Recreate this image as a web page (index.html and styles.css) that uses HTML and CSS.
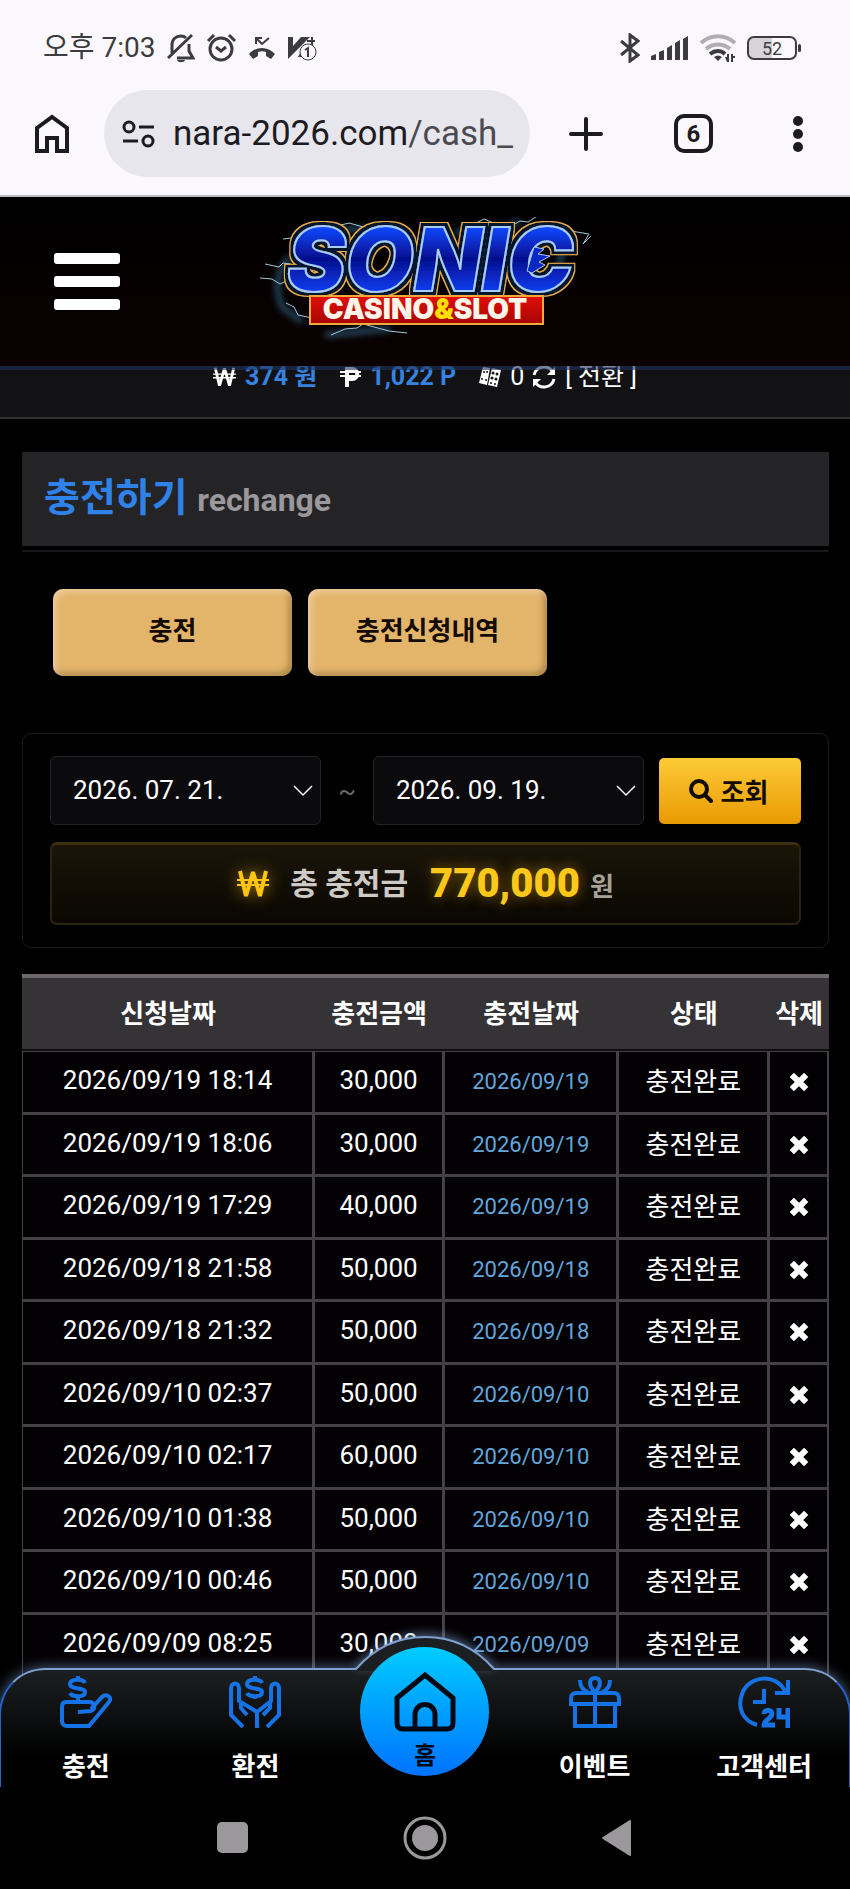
FILE: index.html
```html
<!DOCTYPE html>
<html lang="ko">
<head>
    <meta charset="UTF-8">
    <meta name="viewport" content="width=device-width, initial-scale=1.0">
    <title>충전하기</title>
    <link rel="stylesheet" href="styles.css">
</head>
<body>
    <svg class="sprite" aria-hidden="true">
        <symbol id="icon-x" viewBox="0 0 20 20">
            <path d="M4 4l12 12M16 4L4 16" stroke="#fff" stroke-width="5"/>
        </symbol>
        <symbol id="icon-won" viewBox="0 0 32 28">
            <path d="M3 1l6 25 7-24 7 24 6-25" fill="none" stroke="currentColor" stroke-width="4" stroke-linejoin="bevel"/>
            <path d="M0 10h32M0 15h32" stroke="currentColor" stroke-width="2"/>
        </symbol>
        <symbol id="icon-chevron" viewBox="0 0 20 12">
            <path d="M1 1l9 9 9-9" fill="none" stroke="#fff" stroke-width="1.5"/>
        </symbol>
    </svg>

    <div class="status-bar">
        <span class="clock">오후 7:03</span>
        <div class="status-left">
            <svg width="28" height="30" viewBox="0 0 28 30" fill="none" stroke="#3c3c3e" stroke-width="3">
                <path d="M5 20V12c0-6 4-9 9-9 2 0 4 1 5 2M22 11v7l4 7H10M1 25l24-23"/>
                <path d="M10 27h8c-1 3-7 3-8 0z" fill="#3c3c3e" stroke="none"/>
            </svg>
            <svg width="31" height="30" viewBox="0 0 31 30" fill="none" stroke="#3c3c3e" stroke-width="3">
                <circle cx="15" cy="16" r="11"/>
                <path d="M2 8l6-6M29 8l-6-6M10 14l5 4 5-4"/>
            </svg>
            <svg width="28" height="24" viewBox="0 0 28 24" fill="none" stroke="#3c3c3e">
                <path d="M8 8V2h6M8 2l6 6 7-6" stroke-width="2"/>
                <path d="M1 18c7-8 19-8 26 0l-4 5-5-3v-4c-3-1-5-1-8 0v4l-5 3z" fill="#3c3c3e" stroke="none"/>
            </svg>
            <svg width="30" height="26" viewBox="0 0 30 26">
                <path d="M1 2h5v9L14 2h9L1 24zM11 22l5-9v9z" fill="#3c3c3e"/>
                <path d="M20 6h8M25 2v8" stroke="#3c3c3e" stroke-width="2"/>
                <circle cx="21" cy="17" r="8" fill="#faf8fd" stroke="#3c3c3e"/>
                <path d="M18 15l3-2v9" fill="none" stroke="#3c3c3e" stroke-width="2"/>
            </svg>
        </div>
        <div class="status-right">
            <svg width="20" height="30" viewBox="0 0 20 30" fill="none" stroke="#3c3c3e" stroke-width="3">
                <path d="M1 8l17 14-8 6V2l8 6L1 22"/>
            </svg>
            <svg width="38" height="25" viewBox="0 0 38 25" fill="#3c3c3e">
                <path d="M0 20l5-2v6H0zM8 16l5-2v10H8zM16 12l5-3v15h-5zM24 7l5-3v20h-5zM32 3l5-3v24h-5z"/>
            </svg>
            <svg width="36" height="28" viewBox="0 0 36 28" fill="none" stroke-width="4">
                <path d="M1 9c10-9 24-9 34 0M6 15c7-6 17-6 24 0" stroke="#b0aeb2"/>
                <path d="M10 20c5-4 11-4 15 0" stroke="#3c3c3e"/>
                <path d="M14 23q4-3 8 0l-4 4zM25 23h2v-3h2v8h-2zM31 20h2v2h2v2h-2v4h-2z" fill="#3c3c3e"/>
            </svg>
            <div class="battery">52</div>
        </div>
    </div>

    <div class="browser-bar">
        <button class="icon-button" aria-label="홈페이지">
            <svg width="36" height="40" viewBox="0 0 36 40" fill="none" stroke="#1c1b1f" stroke-width="4">
                <path d="M3 37V14L18 3l15 11v23H23V24H13v13z"/>
            </svg>
        </button>
        <div class="address">
            <svg width="34" height="28" viewBox="0 0 34 28" fill="none" stroke="#1c1b1f" stroke-width="3">
                <circle cx="7" cy="7" r="5"/>
                <circle cx="26" cy="21" r="5"/>
                <path d="M17 7h15M1 21h15"/>
            </svg>
            <span class="url">nara-2026.com<span class="path">/cash_</span></span>
        </div>
        <button class="icon-button new-tab" aria-label="새 탭">
            <svg width="36" height="36" viewBox="0 0 36 36" stroke="#1c1b1f" stroke-width="4" stroke-linecap="round">
                <path d="M18 3v30M3 18h30"/>
            </svg>
        </button>
        <button class="icon-button tab-count">6</button>
        <button class="icon-button more" aria-label="메뉴">
            <svg width="10" height="36" viewBox="0 0 10 36" fill="#1c1b1f">
                <circle cx="5" cy="5" r="5"/>
                <circle cx="5" cy="18" r="5"/>
                <circle cx="5" cy="31" r="5"/>
            </svg>
        </button>
    </div>

    <div class="site">
        <header class="site-header">
            <button class="hamburger" aria-label="전체 메뉴"><span></span><span></span><span></span></button>
            <a class="logo" href="#" aria-label="SONIC CASINO&amp;SLOT">
                <svg width="340" height="130" viewBox="0 0 340 130">
                    <defs>
                        <linearGradient id="sonic" x1="0" y1="0" x2="0" y2="1">
                            <stop offset="0.2" stop-color="#1248ff"/>
                            <stop offset="0.5" stop-color="#050e8c"/>
                            <stop offset="0.8" stop-color="#0a3cf0"/>
                        </linearGradient>
                        <linearGradient id="ribbon" x1="0" y1="0" x2="0" y2="1">
                            <stop offset="0" stop-color="#e01008"/>
                            <stop offset="1" stop-color="#a80404"/>
                        </linearGradient>
                        <filter id="glow" x="-10%" y="-20%" width="120%" height="140%">
                            <feGaussianBlur stdDeviation="3"/>
                        </filter>
                        <!-- navy and gold rims round the letters -->
                        <filter id="rims" x="-5%" y="-10%" width="110%" height="120%">
                            <feMorphology in="SourceAlpha" operator="dilate" radius="4" result="outer"/>
                            <feFlood flood-color="#f0b14c"/>
                            <feComposite in2="outer" operator="in" result="gold"/>
                            <feMorphology in="SourceAlpha" operator="dilate" radius="3" result="inner"/>
                            <feFlood flood-color="#06142e"/>
                            <feComposite in2="inner" operator="in" result="navy"/>
                            <feMerge>
                                <feMergeNode in="gold"/>
                                <feMergeNode in="navy"/>
                                <feMergeNode in="SourceGraphic"/>
                            </feMerge>
                        </filter>
                    </defs>
                    <g fill="none" stroke="#4ba3d6" stroke-width="5" filter="url(#glow)" opacity="0.5">
                        <path d="M35 40q-20 20-8 50l20 15M70 15l40-4M200 16l25-6 15 6 25-12M290 20l20 4-6 24M70 118l65-6"/>
                    </g>
                    <g fill="none" stroke="#a4c8d6" stroke-width="1">
                        <path d="M5 61l12 1 8 5 6-3 6 8M10 47l14 3 4-4 8 1M28 22l16-2M31 86l8 4 4 8 14 3M74 11l20-5 18 5 12 1M205 14l24-12 12 5 10 5 14-8 8 1 14-9M316 14l18 3-6 10 8-8M76 118l14-6 12-1 6-4 26 7 18 2"/>
                    </g>
                    <text class="logo-main" x="32" y="74" filter="url(#rims)">SONIC</text>
                    <!-- spiked teeth in the mouth of the C -->
                    <path d="M279 30l10 2-6 5 12 2-11 6 6 3-13 8-5-2z" fill="#0a28c4" stroke="#a9cdf8" stroke-width="1"/>
                    <rect x="55" y="79" width="233" height="28" fill="url(#ribbon)" stroke="#f3a93a" stroke-width="2"/>
                    <path d="M90 108h160" stroke="#ffc34a" stroke-width="2" filter="url(#glow)"/>
                    <text class="logo-sub" x="170" y="102">CASINO<tspan fill="#ffe000">&amp;</tspan>SLOT</text>
                </svg>
            </a>
        </header>

        <div class="balance">
            <svg class="won" width="23" height="20"><use href="#icon-won"/></svg>
            <b>374 원</b>
            <svg class="peso" width="21" height="20" viewBox="0 0 21 20" fill="none" stroke="#fff">
                <path d="M7 20V2h5c7 0 7 10 0 10H7" stroke-width="4"/>
                <path d="M0 5h21M0 9h21" stroke-width="2"/>
            </svg>
            <b>1,022 P</b>
            <svg class="dice" width="24" height="22" viewBox="0 0 24 22">
                <path d="M5 1l7 1-3 17-8-2zM14 2l9 2-4 17-9-2z" fill="#fff"/>
                <g fill="#121214">
                    <circle cx="6" cy="6" r="1"/><circle cx="9" cy="6" r="1"/><circle cx="4" cy="13" r="1"/><circle cx="8" cy="14" r="1"/>
                    <circle cx="15" cy="7" r="1.5"/><circle cx="19" cy="8" r="1.5"/><circle cx="14" cy="12" r="1.5"/><circle cx="18" cy="13" r="1.5"/><circle cx="13" cy="17" r="1"/><circle cx="17" cy="18" r="1"/>
                </g>
            </svg>
            <span class="slot-point">0</span>
            <svg width="24" height="24" viewBox="0 0 24 24" fill="none" stroke="#fff" stroke-width="3">
                <path d="M2 10C4 1 16-1 21 7M22 14C20 23 8 25 3 17"/>
                <path d="M23 2v8h-8zM1 22v-8h8z" fill="#fff" stroke="none"/>
            </svg>
            <a class="convert" href="#">[ 전환 ]</a>
        </div>

        <main class="content">
            <div class="page-title">
                <h1>충전하기 <small>rechange</small></h1>
            </div>

            <div class="tabs">
                <button class="tab">충전</button>
                <button class="tab">충전신청내역</button>
            </div>

            <section class="search-panel">
                <form class="search-form">
                    <div class="date-field">
                        <select aria-label="시작일"><option>2026. 07. 21.</option></select>
                        <svg width="20" height="12"><use href="#icon-chevron"/></svg>
                    </div>
                    <span class="tilde">~</span>
                    <div class="date-field">
                        <select aria-label="종료일"><option>2026. 09. 19.</option></select>
                        <svg width="20" height="12"><use href="#icon-chevron"/></svg>
                    </div>
                    <button class="search-button" type="button">
                        <svg width="25" height="25" viewBox="0 0 25 25" fill="none" stroke="#120c00" stroke-width="4">
                            <circle cx="11" cy="11" r="8"/>
                            <path d="M17 17l6 6" stroke-linecap="round"/>
                        </svg>
                        조회
                    </button>
                </form>
                <div class="total">
                    <svg class="total-icon" width="32" height="28"><use href="#icon-won"/></svg>
                    <span class="total-label">총 충전금</span>
                    <strong>770,000</strong>
                    <span class="total-unit">원</span>
                </div>
            </section>

            <table class="history">
                <colgroup>
                    <col class="col-requested"><col class="col-amount"><col class="col-charged"><col class="col-state"><col class="col-delete">
                </colgroup>
                <thead>
                    <tr><th>신청날짜</th><th>충전금액</th><th>충전날짜</th><th>상태</th><th>삭제</th></tr>
                </thead>
                <tbody>
                    <tr><td>2026/09/19 18:14</td><td>30,000</td><td class="charged">2026/09/19</td><td class="state">충전완료</td><td class="remove"><button class="delete" aria-label="삭제"><svg width="24" height="24"><use href="#icon-x"/></svg></button></td></tr>
                    <tr><td>2026/09/19 18:06</td><td>30,000</td><td class="charged">2026/09/19</td><td class="state">충전완료</td><td class="remove"><button class="delete" aria-label="삭제"><svg width="24" height="24"><use href="#icon-x"/></svg></button></td></tr>
                    <tr><td>2026/09/19 17:29</td><td>40,000</td><td class="charged">2026/09/19</td><td class="state">충전완료</td><td class="remove"><button class="delete" aria-label="삭제"><svg width="24" height="24"><use href="#icon-x"/></svg></button></td></tr>
                    <tr><td>2026/09/18 21:58</td><td>50,000</td><td class="charged">2026/09/18</td><td class="state">충전완료</td><td class="remove"><button class="delete" aria-label="삭제"><svg width="24" height="24"><use href="#icon-x"/></svg></button></td></tr>
                    <tr><td>2026/09/18 21:32</td><td>50,000</td><td class="charged">2026/09/18</td><td class="state">충전완료</td><td class="remove"><button class="delete" aria-label="삭제"><svg width="24" height="24"><use href="#icon-x"/></svg></button></td></tr>
                    <tr><td>2026/09/10 02:37</td><td>50,000</td><td class="charged">2026/09/10</td><td class="state">충전완료</td><td class="remove"><button class="delete" aria-label="삭제"><svg width="24" height="24"><use href="#icon-x"/></svg></button></td></tr>
                    <tr><td>2026/09/10 02:17</td><td>60,000</td><td class="charged">2026/09/10</td><td class="state">충전완료</td><td class="remove"><button class="delete" aria-label="삭제"><svg width="24" height="24"><use href="#icon-x"/></svg></button></td></tr>
                    <tr><td>2026/09/10 01:38</td><td>50,000</td><td class="charged">2026/09/10</td><td class="state">충전완료</td><td class="remove"><button class="delete" aria-label="삭제"><svg width="24" height="24"><use href="#icon-x"/></svg></button></td></tr>
                    <tr><td>2026/09/10 00:46</td><td>50,000</td><td class="charged">2026/09/10</td><td class="state">충전완료</td><td class="remove"><button class="delete" aria-label="삭제"><svg width="24" height="24"><use href="#icon-x"/></svg></button></td></tr>
                    <tr><td>2026/09/09 08:25</td><td>30,000</td><td class="charged">2026/09/09</td><td class="state">충전완료</td><td class="remove"><button class="delete" aria-label="삭제"><svg width="24" height="24"><use href="#icon-x"/></svg></button></td></tr>
                </tbody>
            </table>
        </main>

        <nav class="bottom-bar">
            <svg class="hump" width="140" height="36" viewBox="0 0 140 36">
                <path d="M1 34Q29 2 70 2t69 32v2H1z" fill="#1c1f21"/>
                <path d="M0 34h1Q29 2 70 2t69 32h1" fill="none" stroke="#7f9fd0" stroke-width="2"/>
            </svg>
            <a href="#">
                <svg width="52" height="52" viewBox="0 0 52 52" fill="none" stroke="#1673e6" stroke-width="4">
                    <path d="M25 7c-2-5-15-4-15 1 0 6 15 3 15 8 0 6-13 5-15 1M18 0v4M18 20v7"/>
                    <path d="M18 36l13-1c5-2 4-9-2-9H6c-3 0-4 2-4 5v14c0 3 2 5 5 5h22l20-24c4-5-3-9-7-5L31 33"/>
                </svg>
                <span>충전</span>
            </a>
            <a href="#">
                <svg width="52" height="52" viewBox="0 0 52 52" fill="none" stroke="#1673e6" stroke-width="4">
                    <path d="M33 7c-2-5-15-4-15 1 0 6 15 3 15 8 0 6-13 5-15 1M26 0v4M26 19v4"/>
                    <path d="M14 51L2 39V12c0-6 8-6 8 0v13l18 11v16M18 39l-6-7v-7M38 51l12-12V12c0-6-8-6-8 0v13L28 36M34 39l7-7v-7"/>
                </svg>
                <span>환전</span>
            </a>
            <a class="home" href="#">
                <svg width="62" height="60" viewBox="0 0 62 60" fill="none" stroke="#000814" stroke-width="5">
                    <path d="M3 26L31 3l28 23v25c0 4-2 6-6 6H9c-4 0-6-2-6-6z"/>
                    <path d="M21 57V43c0-14 20-14 20 0v14"/>
                </svg>
                <span>홈</span>
            </a>
            <a href="#">
                <svg width="52" height="52" viewBox="0 0 52 52" fill="none" stroke="#1673e6" stroke-width="4">
                    <path d="M2 28v-6c0-3 2-5 5-5h38c3 0 5 2 5 5v6zM6 28v22h40V28M26 17v33"/>
                    <path d="M26 16c-7-6-6-14 0-14s7 8 0 14zM11 4c0 6 2 10 8 12M41 4c0 6-2 10-8 12"/>
                </svg>
                <span>이벤트</span>
            </a>
            <a href="#">
                <svg width="52" height="52" viewBox="0 0 52 52" fill="none" stroke="#1673e6" stroke-width="4">
                    <path d="M19 49C5 45-1 32 4 18 11-1 38-3 47 15M50 4v13H37M26 13v13H15"/>
                    <path class="digits" d="M26 38c0-5 8-5 8 0 0 4-8 6-8 11h11M41 32v9h9M50 32v20"/>
                </svg>
                <span>고객센터</span>
            </a>
        </nav>
    </div>

    <div class="system-nav">
        <button class="icon-button" aria-label="최근 앱">
            <svg width="44" height="44" viewBox="0 0 44 44"><rect x="6" y="6" width="31" height="31" rx="5" fill="#9b989b"/></svg>
        </button>
        <button class="icon-button" aria-label="홈 화면">
            <svg width="44" height="44" viewBox="0 0 44 44">
                <circle cx="22" cy="22" r="20" fill="none" stroke="#9b989b" stroke-width="3"/>
                <circle cx="22" cy="22" r="13" fill="#9b989b"/>
            </svg>
        </button>
        <button class="icon-button" aria-label="뒤로">
            <svg width="44" height="44" viewBox="0 0 44 44"><path d="M8 22L35 5v34z" fill="#9b989b" stroke="#9b989b" stroke-width="2" stroke-linejoin="round"/></svg>
        </button>
    </div>
</body>
</html>
```
FILE: styles.css
```css
* {
    box-sizing: border-box;
}

body {
    margin: 0;
    height: 100vh;
    display: flex;
    flex-direction: column;
    overflow: hidden;
    background-color: #000;
    color: #fff;
    font-family: Roboto, "Noto Sans CJK KR", sans-serif;
    font-size: 26px;
}

button,
select {
    font-family: inherit;
    font-size: inherit;
}

a {
    color: inherit;
    text-decoration: none;
}

svg {
    display: block;
    flex: none;
}

.sprite {
    position: absolute;
    width: 0;
    height: 0;
}

.icon-button {
    padding: 0;
    border: 0;
    background: none;
    color: #1c1b1f;
}

/* phone status bar */
.status-bar {
    display: flex;
    align-items: center;
    height: 90px;
    padding: 6px 49px 0 43px;
    background-color: #faf8fd;
    color: #3c3c3e;
}

.clock {
    font-size: 28px;
    line-height: 32px;
}

.status-left,
.status-right {
    display: flex;
    align-items: center;
    gap: 11px;
}

.status-left {
    margin-left: 12px;
}

.status-right {
    margin-left: auto;
}

.battery {
    position: relative;
    width: 50px;
    height: 24px;
    margin-right: 4px;
    border: 2px solid #3c3c3e;
    border-radius: 7px;
    background: linear-gradient(90deg, #d6d4d9 50%, #faf8fd 50%);
    font-size: 18px;
    line-height: 21px;
    text-align: center;
}

.battery::after {
    content: "";
    position: absolute;
    top: 6px;
    right: -6px;
    width: 3px;
    height: 8px;
    border-radius: 2px;
    background-color: #3c3c3e;
}

/* browser toolbar */
.browser-bar {
    display: flex;
    align-items: center;
    height: 107px;
    padding: 0 47px 18px 34px;
    border-bottom: 2px solid #bdbbc0;
    background-color: #faf8fd;
}

.address {
    display: flex;
    flex: 1;
    align-items: center;
    gap: 17px;
    min-width: 0;
    height: 87px;
    margin: 0 38px 0 34px;
    padding-left: 18px;
    border-radius: 44px;
    background-color: #e7e6ed;
    overflow: hidden;
}

.url {
    color: #1c1b1f;
    font-size: 35px;
    line-height: 40px;
    white-space: nowrap;
}

.path {
    color: #4b4a50;
}

.tab-count {
    width: 39px;
    height: 39px;
    margin: 0 80px 0 70px;
    border: 4px solid #1c1b1f;
    border-radius: 10px;
    font-size: 24px;
    font-weight: 700;
    line-height: 30px;
}

/* site header */
.site {
    position: relative;
    flex: 1;
    min-height: 0;
    overflow: hidden;
}

.site-header {
    position: relative;
    z-index: 1;
    display: flex;
    align-items: center;
    justify-content: center;
    height: 173px;
    border-bottom: 4px solid rgba(30, 48, 90, 0.6);
    background: linear-gradient(#000, #0b0102);
    background-clip: padding-box;
}

.hamburger {
    position: absolute;
    left: 54px;
    display: flex;
    flex-direction: column;
    gap: 12px;
    width: 66px;
    padding: 0;
    border: 0;
    background: none;
}

.hamburger span {
    height: 11px;
    border-radius: 3px;
    background-color: #fff;
}

.logo-main {
    fill: url(#sonic);
    stroke: #a9cdf8;
    stroke-width: 2px;
    font-family: Inter, sans-serif;
    font-size: 88px;
    font-style: italic;
    font-weight: 900;
}

.logo-sub {
    fill: #fff4e8;
    font-family: Inter, sans-serif;
    font-size: 28px;
    font-weight: 900;
    text-anchor: middle;
}

/* balance strip, scrolled partly below the header */
.balance {
    display: flex;
    align-items: center;
    justify-content: center;
    height: 56px;
    margin-top: -7px;
    padding-bottom: 26px;
    border-bottom: 2px solid #313133;
    background-color: #121214;
    font-size: 25px;
    line-height: 26px;
    white-space: nowrap;
}

.balance b {
    margin-left: 9px;
    color: #3683e0;
}

.peso {
    margin-left: 23px;
}

.dice {
    margin-left: 22px;
}

.slot-point {
    margin: 0 8px;
}

.convert {
    margin-left: 9px;
}

/* page */
.content {
    padding: 33px 21px 0 22px;
}

.page-title {
    padding-bottom: 4px;
    border-bottom: 2px solid #171719;
}

.page-title h1 {
    margin: 0;
    padding: 0 22px;
    background-color: #242326;
    color: #2f82e8;
    font-size: 39px;
    font-weight: 700;
    line-height: 92px;
}

.page-title small {
    color: #9a989b;
    font-size: 32px;
}

.tabs {
    display: flex;
    gap: 16px;
    padding: 37px 31px 57px;
}

.tab {
    width: 239px;
    height: 87px;
    padding: 0 0 8px;
    border: 0;
    border-radius: 10px;
    background-color: #e3b56b;
    box-shadow: inset 3px 3px 6px rgba(255, 225, 200, 0.6), inset -3px -3px 6px rgba(110, 80, 30, 0.5);
    color: #140b02;
    font-weight: 700;
}

.search-panel {
    padding: 22px 27px;
    border: 1px solid #1b1b1e;
    border-radius: 9px;
}

.search-form {
    display: flex;
    align-items: center;
    margin-bottom: 17px;
}

.date-field {
    position: relative;
    flex: 1;
}

.date-field select {
    appearance: none;
    width: 100%;
    height: 69px;
    padding: 0 22px 2px;
    border: 1px solid #232326;
    border-radius: 6px;
    background-color: #0b0a0d;
    color: #fff;
}

.date-field svg {
    position: absolute;
    top: 29px;
    right: 8px;
    pointer-events: none;
}

.tilde {
    width: 52px;
    color: #6b6a6c;
    text-align: center;
}

.search-button {
    display: flex;
    align-items: center;
    justify-content: center;
    gap: 8px;
    width: 142px;
    height: 66px;
    margin-left: 15px;
    padding: 0 4px 0 0;
    border: 0;
    border-radius: 5px;
    background: linear-gradient(#fdcb38, #e89a02);
    color: #120c00;
    font-weight: 700;
}

.total {
    display: flex;
    align-items: center;
    justify-content: center;
    height: 83px;
    border: 2px solid #2c240c;
    border-top: 3px solid #3a2e0c;
    border-radius: 7px;
    background: linear-gradient(#1b1509, #0a0702);
    line-height: 40px;
    font-weight: 700;
}

.total-icon {
    margin-right: 21px;
    color: #ffc414;
    filter: drop-shadow(0 0 8px rgba(255, 190, 0, 0.6));
}

.total-label {
    color: #cdc9c5;
    font-size: 30px;
}

.total strong {
    margin: 0 10px 0 22px;
    color: #fcc81a;
    font-size: 40px;
    text-shadow: 0 0 14px rgba(255, 190, 0, 0.5);
}

.total-unit {
    padding-top: 6px;
    color: #a8a296;
}

/* history table */
.history {
    width: 100%;
    margin-top: 26px;
    border-collapse: separate;
    border-spacing: 0;
    table-layout: fixed;
    line-height: 30px;
    text-align: center;
}

.col-requested { width: 36.2%; }
.col-amount { width: 16.1%; }
.col-charged { width: 21.6%; }
.col-state { width: 18.7%; }
.col-delete { width: 7.4%; }

.history th {
    height: 77px;
    padding: 0;
    border-top: 4px solid #6c686c;
    border-bottom: 2px solid #100f10;
    background-color: #363336;
    font-weight: 700;
    white-space: nowrap;
}

.history td {
    height: 63px;
    padding: 0 0 4px;
    border: solid #444144;
    border-width: 1px 2px 2px 1px;
    background-color: #040104;
    white-space: nowrap;
}

.history tr:nth-child(even) td {
    height: 62px;
}

.history .state,
.history .remove {
    padding-bottom: 0;
}

.history .charged {
    padding-bottom: 0;
    color: #62a6dc;
    font-size: 22px;
}

.delete {
    display: block;
    margin: 0 auto;
    padding: 0;
    border: 0;
    background: none;
}

/* fixed menu at the bottom of the site */
.bottom-bar {
    position: absolute;
    right: -1px;
    bottom: 0;
    left: -1px;
    display: grid;
    grid-template-columns: repeat(5, 1fr);
    height: 119px;
    border: 2px solid #7f9fd0;
    border-right-color: #2a62cc;
    border-bottom: 0;
    border-left-color: #2a62cc;
    border-radius: 46px 46px 0 0;
    background: linear-gradient(#1c1f21, #000 75%);
    box-shadow: 0 0 14px rgba(130, 170, 220, 0.6);
}

.bottom-bar a {
    display: flex;
    flex-direction: column;
    align-items: center;
    gap: 24px;
    padding-top: 6px;
    font-weight: 700;
    line-height: 30px;
}

.hump {
    position: absolute;
    top: -35px;
    left: 50%;
    transform: translateX(-50%);
    filter: drop-shadow(0 -3px 5px rgba(130, 170, 220, 0.5));
}

.bottom-bar .home {
    position: relative;
    justify-self: center;
    gap: 9px;
    width: 129px;
    height: 129px;
    margin-top: -23px;
    padding-top: 25px;
    border-radius: 50%;
    background: linear-gradient(#00ccff, #0072ff);
    color: #000814;
    font-size: 24px;
}

.digits {
    stroke-width: 5px;
}

/* system buttons */
.system-nav {
    display: flex;
    justify-content: center;
    gap: 148px;
    height: 102px;
    padding-top: 29px;
    background-color: #000;
}

.system-nav .icon-button {
    height: 44px;
}
```
